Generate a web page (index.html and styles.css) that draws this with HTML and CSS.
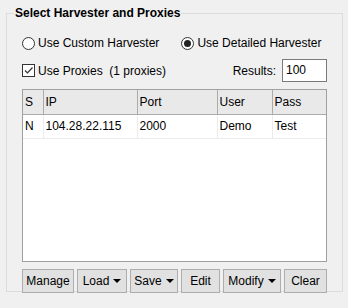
FILE: index.html
```html
<!DOCTYPE html>
<html lang="en">
<head>
  <meta charset="UTF-8">
  <title>Select Harvester and Proxies</title>
  <link rel="stylesheet" href="styles.css">
</head>
<body>
  <fieldset class="panel">
    <legend class="panel__title">Select Harvester and Proxies</legend>

    <div class="panel__row panel__row--radios">
      <label class="choice">
        <span class="radio"></span>Use Custom Harvester
      </label>
      <label class="choice choice--second">
        <span class="radio radio--on"></span>Use Detailed Harvester
      </label>
    </div>

    <div class="panel__row panel__row--proxies">
      <label class="choice">
        <span class="check">
          <svg width="11" height="11" viewBox="0 0 11 11"><path d="M2 5.5 L4.5 8 L9.5 2.5" fill="none" stroke="#333" stroke-width="1.2"/></svg>
        </span>Use Proxies&nbsp; (1 proxies)
      </label>
      <span class="results">
        Results:
        <span class="results__box">100</span>
      </span>
    </div>

    <div class="grid">
      <table class="grid__table">
        <thead>
          <tr>
            <th class="col-s">S</th>
            <th class="col-ip">IP</th>
            <th class="col-port">Port</th>
            <th class="col-user">User</th>
            <th class="col-pass">Pass</th>
          </tr>
        </thead>
        <tbody>
          <tr>
            <td>N</td>
            <td>104.28.22.115</td>
            <td>2000</td>
            <td>Demo</td>
            <td>Test</td>
          </tr>
        </tbody>
      </table>
    </div>

    <div class="buttons">
      <button class="btn btn--manage">Manage</button>
      <button class="btn btn--load">Load <span class="caret"></span></button>
      <button class="btn btn--save">Save <span class="caret"></span></button>
      <button class="btn btn--edit">Edit</button>
      <button class="btn btn--modify">Modify <span class="caret"></span></button>
      <button class="btn btn--clear">Clear</button>
    </div>
  </fieldset>
</body>
</html>
```

FILE: styles.css
```css
body, html {
  margin: 0;
  background: #f0f0f0;
  overflow: hidden;
}

body {
  font-family: "Liberation Sans", Arial, sans-serif;
  font-size: 12px;
  color: #000;
}

.panel {
  margin: 6px 6px 7px 6px;
  padding: 16px 15px 8px 15px;
  border: 1px solid #dcdcdc;
  width: 337px;
  min-width: 0;
  height: 286px;
  box-sizing: border-box;
}

.panel__title {
  font-weight: bold;
  font-size: 12px;
  line-height: 14px;
  padding: 0 1px;
  margin-left: -8px;
}

.panel__row {
  display: flex;
  align-items: center;
}

.panel__row--radios {
  height: 14px;
}

.panel__row--proxies {
  margin-top: 9px;
  height: 23px;
}

.choice {
  display: flex;
  align-items: center;
  line-height: 14px;
}

.choice--second {
  margin-left: 22px;
}

.radio {
  width: 11px;
  height: 11px;
  border: 1px solid #333;
  border-radius: 50%;
  background: #fff;
  margin-right: 3px;
  display: flex;
  align-items: center;
  justify-content: center;
}

.radio--on::after {
  content: "";
  width: 7px;
  height: 7px;
  border-radius: 50%;
  background: #222;
}

.check {
  width: 11px;
  height: 11px;
  border: 1px solid #333;
  background: #fff;
  margin-right: 3px;
  display: flex;
}

.results {
  margin-left: auto;
  display: flex;
  align-items: center;
  gap: 6px;
}

.results__box {
  width: 45px;
  height: 23px;
  border: 1px solid #7a7a7a;
  background: #fff;
  box-sizing: border-box;
  padding-left: 3px;
  line-height: 21px;
}

.grid {
  margin-top: 7px;
  width: 305px;
  height: 173px;
  border: 1px solid #a0a0a0;
  background: #fff;
  box-sizing: border-box;
}

.grid__table {
  border-collapse: collapse;
  table-layout: fixed;
  width: 303px;
}

.grid__table th,
.grid__table td {
  box-sizing: border-box;
  height: 24px;
  padding: 0 2px;
  text-align: left;
  font-weight: normal;
  white-space: nowrap;
  overflow: hidden;
}

.grid__table th {
  background: #e9e9e9;
  border-right: 1px solid #ababab;
  border-bottom: 1px solid #ababab;
}

.grid__table td {
  border-right: 1px solid #ececec;
  border-bottom: 1px solid #ececec;
}

.grid__table th:last-child,
.grid__table td:last-child {
  border-right: none;
}

.col-s { width: 20px; }
.col-ip { width: 94px; }
.col-port { width: 80px; }
.col-user { width: 55px; }
.col-pass { width: 54px; }

.buttons {
  margin-top: 7px;
  display: flex;
  gap: 3px;
}

.btn {
  height: 24px;
  padding: 0;
  border: 1px solid #adadad;
  background: #e1e1e1;
  font-family: inherit;
  font-size: 12px;
  color: #000;
  display: flex;
  align-items: center;
  justify-content: center;
}

.btn--manage { width: 52px; }
.btn--load { width: 50px; }
.btn--save { width: 48px; }
.btn--edit { width: 39px; }
.btn--modify { width: 58px; }
.btn--clear { width: 43px; }

.caret {
  margin-left: 4px;
  width: 0;
  height: 0;
  border-left: 4px solid transparent;
  border-right: 4px solid transparent;
  border-top: 4px solid #000;
}
```
